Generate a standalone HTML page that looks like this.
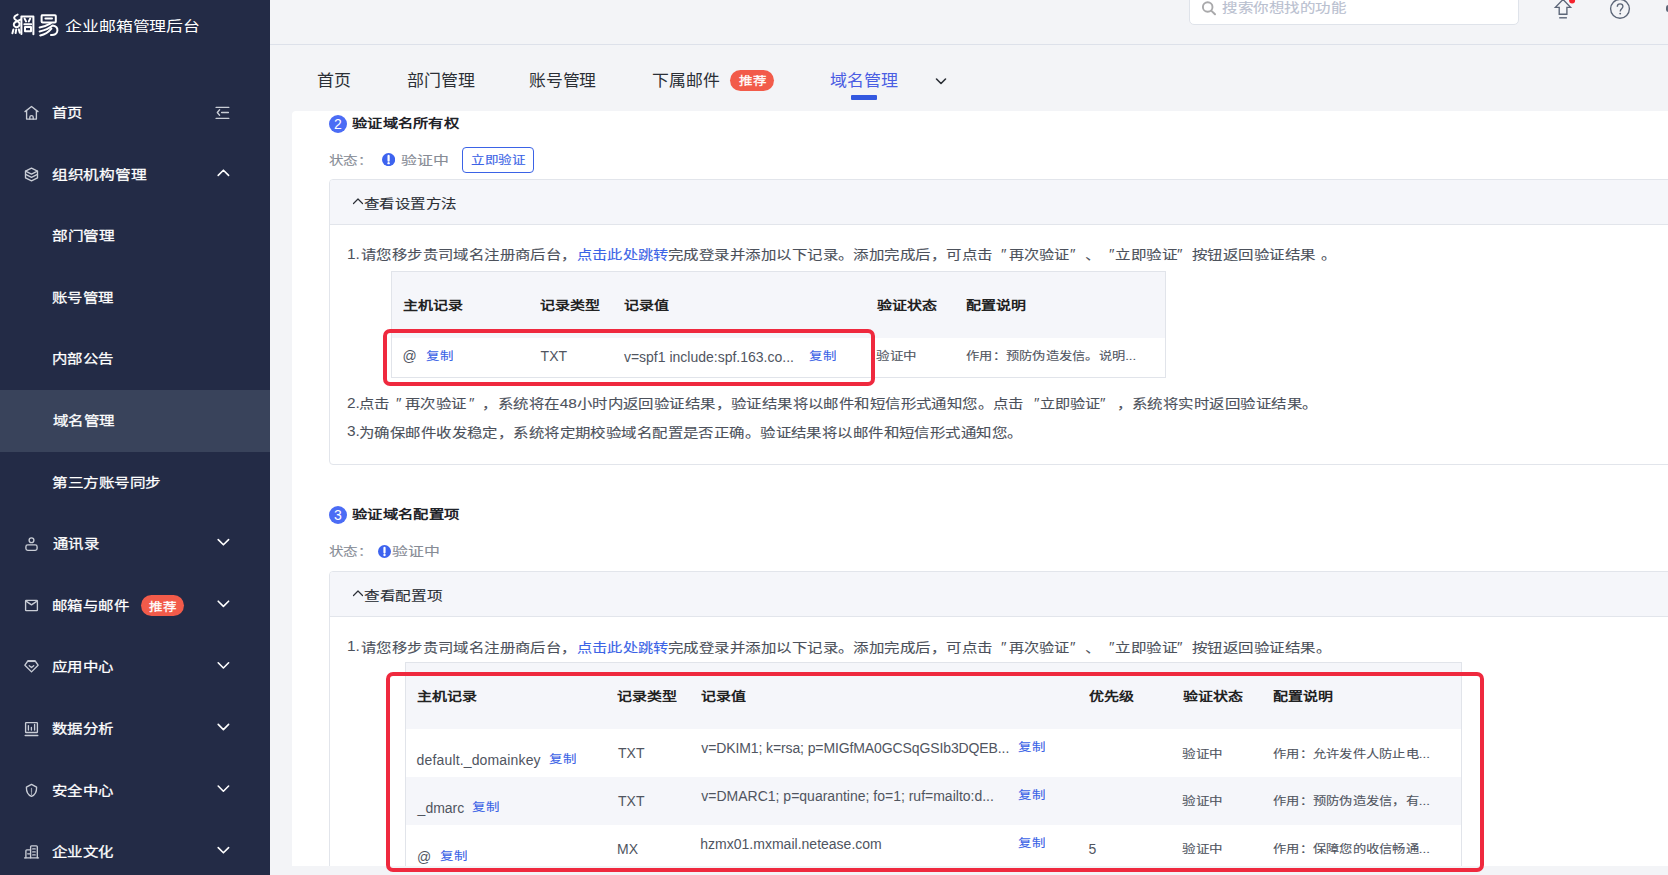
<!DOCTYPE html>
<html lang="zh-CN"><head><meta charset="utf-8">
<style>
*{box-sizing:border-box;margin:0;padding:0}
html,body{width:1668px;height:875px;overflow:hidden}
body{position:relative;background:#f3f4f7;font-family:"Liberation Sans", sans-serif}
.b{position:absolute;display:block}
.t{position:absolute;white-space:nowrap;line-height:1;transform-origin:0 0}
.s{-webkit-text-stroke:0.3px currentColor}
</style></head><body>
<div class=b style='left:0px;top:0px;width:270px;height:875px;background:#232b46'></div>
<div class=b style='left:0px;top:390px;width:270px;height:62px;background:#39435b'></div>
<div class=b style='left:140.6px;top:595px;width:43.0px;height:21px;background:#f25b4a;border-radius:11px'></div>
<svg class=b style='left:0;top:0' width='270' height='875' viewBox='0 0 270 875'><path fill='none' stroke='#c9cdd6' stroke-width='1.35' stroke-linejoin='round' stroke-linecap='round' d='M25 111.6 L31.5 106.5 L38 111.6'/><path fill='none' stroke='#c9cdd6' stroke-width='1.35' stroke-linejoin='round' stroke-linecap='round' d='M26.6 110.8 V119.1 H36.4 V110.8'/><path fill='none' stroke='#c9cdd6' stroke-width='1.35' stroke-linejoin='round' stroke-linecap='round' d='M29.8 119 V117.3 A1.7 1.7 0 0 1 33.2 117.3 V119'/><path fill='none' stroke='#c9cdd6' stroke-width='1.35' stroke-linejoin='round' stroke-linecap='round' d='M31.5 168.1 L37.5 171.1 V177.9 L31.5 180.9 L25.5 177.9 V171.1 Z'/><path fill='none' stroke='#c9cdd6' stroke-width='1.35' stroke-linejoin='round' stroke-linecap='round' d='M25.6 171.2 L31.5 174.1 L37.4 171.2'/><path fill='none' stroke='#c9cdd6' stroke-width='1.35' stroke-linejoin='round' stroke-linecap='round' d='M25.6 174.4 L31.5 177.3 L37.4 174.4'/><circle fill='none' stroke='#c9cdd6' stroke-width='1.35' stroke-linejoin='round' stroke-linecap='round' cx='31.5' cy='540.2' r='2.4'/><rect fill='none' stroke='#c9cdd6' stroke-width='1.35' stroke-linejoin='round' stroke-linecap='round' x='25.9' y='544.9' width='11.2' height='5.4' rx='1.8'/><rect fill='none' stroke='#c9cdd6' stroke-width='1.35' stroke-linejoin='round' stroke-linecap='round' x='25.6' y='600.4' width='11.8' height='10.2' rx='0.6'/><path fill='none' stroke='#c9cdd6' stroke-width='1.35' stroke-linejoin='round' stroke-linecap='round' d='M26.4 601.4 L31.5 604.9 L36.6 601.4'/><path fill='none' stroke='#c9cdd6' stroke-width='1.35' stroke-linejoin='round' stroke-linecap='round' d='M27.8 661 H35.2 L38.1 665.2 L31.5 671.9 L24.9 665.2 Z'/><path d='M27.8 661.1 H35.2' stroke='#c9cdd6' stroke-width='1.9'/><path fill='none' stroke='#c9cdd6' stroke-width='1.35' stroke-linejoin='round' stroke-linecap='round' d='M29.3 665.7 L31.5 667.6 L33.7 665.7'/><rect fill='none' stroke='#c9cdd6' stroke-width='1.35' stroke-linejoin='round' stroke-linecap='round' x='25.6' y='722.6' width='11.8' height='9.9' rx='0.6'/><path fill='none' stroke='#c9cdd6' stroke-width='1.35' stroke-linejoin='round' stroke-linecap='round' d='M25.2 735.5 H37.8'/><path fill='none' stroke='#c9cdd6' stroke-width='1.35' stroke-linejoin='round' stroke-linecap='round' d='M28.4 725.6 V730 M31.4 727.4 V730 M34.6 724.5 V730' stroke-width='1.1'/><path fill='none' stroke='#c9cdd6' stroke-width='1.35' stroke-linejoin='round' stroke-linecap='round' d='M31.5 784.4 L36.6 787.2 C36.7 791.5 35 795 31.5 796.4 C28 795 26.3 791.5 26.4 787.2 Z'/><path d='M31.5 788.3 V792.3 M31.5 793.6 V794.3' stroke='#9aa0ad' stroke-width='1.2' stroke-linecap='round'/><path fill='none' stroke='#c9cdd6' stroke-width='1.35' stroke-linejoin='round' stroke-linecap='round' d='M24.6 857.9 H38.5'/><path fill='none' stroke='#c9cdd6' stroke-width='1.35' stroke-linejoin='round' stroke-linecap='round' d='M30.6 857.8 V846.8 Q30.6 845.9 31.5 845.9 H36.4 Q37.3 845.9 37.3 846.8 V857.8'/><path fill='none' stroke='#c9cdd6' stroke-width='1.35' stroke-linejoin='round' stroke-linecap='round' d='M25.9 857.8 V850.7 Q25.9 849.8 26.8 849.8 H30.6'/><path fill='none' stroke='#c9cdd6' stroke-width='1.35' stroke-linejoin='round' stroke-linecap='round' d='M32.7 848.9 H35.2 M32.7 851.9 H35.2 M32.7 854.9 H35.2 M27.7 853.8 H30'/><path fill='none' stroke='#c9cdd6' stroke-width='1.35' stroke-linejoin='round' stroke-linecap='round' d='M216.1 107.4 H228.8 M216.1 118.4 H228.8 M221.6 112.5 H228.4'/><path fill='none' stroke='#c9cdd6' stroke-width='1.35' stroke-linejoin='round' stroke-linecap='round' d='M219.6 109.8 L217.3 112.5 L219.6 115.2'/><path fill='none' stroke='#ffffff' stroke-width='1.6' stroke-linecap='round' stroke-linejoin='round' d='M218.2 175.4 L223.4 170.2 L228.6 175.4'/><path fill='none' stroke='#ffffff' stroke-width='1.6' stroke-linecap='round' stroke-linejoin='round' d='M218.2 539.6 L223.4 544.8 L228.6 539.6'/><path fill='none' stroke='#ffffff' stroke-width='1.6' stroke-linecap='round' stroke-linejoin='round' d='M218.2 601.2 L223.4 606.4 L228.6 601.2'/><path fill='none' stroke='#ffffff' stroke-width='1.6' stroke-linecap='round' stroke-linejoin='round' d='M218.2 662.8 L223.4 668.0 L228.6 662.8'/><path fill='none' stroke='#ffffff' stroke-width='1.6' stroke-linecap='round' stroke-linejoin='round' d='M218.2 724.4 L223.4 729.6 L228.6 724.4'/><path fill='none' stroke='#ffffff' stroke-width='1.6' stroke-linecap='round' stroke-linejoin='round' d='M218.2 786.0 L223.4 791.2 L228.6 786.0'/><path fill='none' stroke='#ffffff' stroke-width='1.6' stroke-linecap='round' stroke-linejoin='round' d='M218.2 847.6 L223.4 852.8 L228.6 847.6'/></svg>
<svg class=b style='left:0;top:0' width='70' height='45' viewBox='0 0 70 45'><path fill='none' stroke='#ffffff' stroke-width='2.0' stroke-linecap='round' stroke-linejoin='round' d='M17.6 14.6 C15.2 15.4 13.3 17.2 14.6 19.0 C15.8 20.6 19.2 21.0 19.6 23.6 C19.9 26.2 17.6 27.6 15.6 27.0 C13.4 26.4 13.2 23.8 15.0 22.4 C16.6 21.2 18.6 20.6 20.4 19.6'/><path fill='none' stroke='#ffffff' stroke-width='2.0' stroke-linecap='round' stroke-linejoin='round' d='M13.4 29.4 L12.4 33.2 M16.2 29.6 L15.6 33.0 M18.8 29.4 L19.8 32.6'/><path fill='none' stroke='#ffffff' stroke-width='2.0' stroke-linecap='round' stroke-linejoin='round' d='M21.4 34.0 V16.4 H33.4 V34.2'/><path fill='none' stroke='#ffffff' stroke-width='2.0' stroke-linecap='round' stroke-linejoin='round' d='M24.6 18.6 L26.0 21.4 M30.2 18.6 L28.8 21.4 M24.4 24.2 H31.2 M25.0 27.0 V31.2 H31.0 V27.0 H25.0'/><path fill='none' stroke='#ffffff' stroke-width='2.0' stroke-linecap='round' stroke-linejoin='round' d='M42.0 15.2 H55.0 Q55.8 15.2 55.8 16.0 V21.6 Q55.8 22.6 54.8 22.6 H42.6 Q41.6 22.6 41.6 21.6 V16.0 Q41.6 15.2 42.4 15.2 Z'/><path fill='none' stroke='#ffffff' stroke-width='2.0' stroke-linecap='round' stroke-linejoin='round' d='M45.4 18.6 H52.0'/><path fill='none' stroke='#ffffff' stroke-width='2.0' stroke-linecap='round' stroke-linejoin='round' d='M39.6 27.4 C43.6 26.6 47.6 25.4 50.8 23.4'/><path fill='none' stroke='#ffffff' stroke-width='2.0' stroke-linecap='round' stroke-linejoin='round' d='M39.6 31.4 C44.8 30.4 49.6 28.2 52.6 25.6 C55.6 26.0 57.6 28.0 57.4 30.8 C57.2 33.6 54.4 35.4 51.0 35.0'/><path fill='none' stroke='#ffffff' stroke-width='2.0' stroke-linecap='round' stroke-linejoin='round' d='M40.2 35.4 C45.0 34.4 49.0 31.6 51.4 28.6'/></svg>
<div class=b style='left:270px;top:44px;width:1398px;height:1px;background:#dde1ea'></div>
<div class=b style='left:1189px;top:-12px;width:330px;height:37px;background:#fff;border:1px solid #dfe3ea;border-radius:5px'></div>
<svg class=b style='left:1200px;top:0px' width='18' height='17' viewBox='0 0 18 17'><circle cx='7.7' cy='7' r='4.8' fill='none' stroke='#a9a9ab' stroke-width='1.9'/><path d='M11.2 10.6 L15 14.3' stroke='#a9a9ab' stroke-width='2' stroke-linecap='round'/></svg>
<svg class=b style='left:0;top:0' width='1668' height='45' viewBox='0 0 1668 45'><path fill='none' stroke='#5b6577' stroke-width='1.35' stroke-linejoin='miter' d='M1563 -0.5 L1570.6 7.4 H1566.9 V14.2 H1559.2 V7.4 H1555.4 Z'/><path d='M1559.2 17.8 H1566.9' stroke='#5b6577' stroke-width='1.4'/><circle cx='1572.1' cy='0.5' r='3' fill='#f5222d'/><circle cx='1620' cy='8.8' r='9.4' fill='none' stroke='#5b6577' stroke-width='1.35' stroke-linejoin='miter'/><path d='M1617.3 6.7 C1617.3 4.9 1618.5 3.9 1620.1 3.9 C1621.8 3.9 1622.9 5 1622.9 6.5 C1622.9 8.6 1620.2 8.8 1620.2 11.4' fill='none' stroke='#5b6577' stroke-width='1.35'/><circle cx='1620.2' cy='13.6' r='0.95' fill='#5b6577'/><rect x='1666' y='5' width='6' height='7' rx='2.5' fill='#5b6577'/></svg>
<div class=b style='left:730.2px;top:70px;width:44.0px;height:21px;background:#f25b4a;border-radius:11px'></div>
<div class=b style='left:851px;top:95px;width:26px;height:4.5px;background:#3358e0;border-radius:1px'></div>
<svg class=b style='left:935px;top:77px' width='12' height='9' viewBox='0 0 12 9'><path fill='none' stroke='#2b2f36' stroke-width='1.6' stroke-linecap='round' stroke-linejoin='round' d='M1.5 2 L6 6.5 L10.5 2'/></svg>
<div class=b style='left:292px;top:111px;width:1376px;height:755px;background:#fff;border-radius:4px 0 0 0'></div>
<div class=b style='left:329px;top:115px;width:18px;height:18px;border-radius:50%;background:#4b6cf5;color:#fff;font-size:14px;line-height:18px;text-align:center;font-family:"Liberation Sans", sans-serif'>2</div>
<div class=b style='left:329px;top:506px;width:18px;height:18px;border-radius:50%;background:#4b6cf5;color:#fff;font-size:14px;line-height:18px;text-align:center;font-family:"Liberation Sans", sans-serif'>3</div>
<svg class=b style='left:382.2px;top:153px' width='13.2' height='13.2' viewBox='0 0 13.2 13.2'><circle cx='6.6' cy='6.6' r='6.6' fill='#3d63ef'/><path d='M6.6 2.904 V7.655999999999999' stroke='#fff' stroke-width='2.244' stroke-linecap='round'/><circle cx='6.6' cy='10.164' r='1.188' fill='#fff'/></svg>
<svg class=b style='left:377.8px;top:545px' width='13' height='13' viewBox='0 0 13 13'><circle cx='6.5' cy='6.5' r='6.5' fill='#3d63ef'/><path d='M6.5 2.86 V7.539999999999999' stroke='#fff' stroke-width='2.21' stroke-linecap='round'/><circle cx='6.5' cy='10.01' r='1.17' fill='#fff'/></svg>
<div class=b style='left:462px;top:147px;width:72px;height:26px;border:1px solid #3b63e6;border-radius:4px'></div>
<div class=b style='left:329px;top:179px;width:1371px;height:286px;border:1px solid #e2e5eb;border-radius:4px;background:#fff'></div>
<div class=b style='left:330px;top:180px;width:1370px;height:44px;background:#f5f6fa;border-radius:3px 0 0 0'></div>
<div class=b style='left:330px;top:224px;width:1370px;height:1px;background:#e2e5eb'></div>
<svg class=b style='left:351.5px;top:196px' width='12' height='9' viewBox='0 0 12 9'><path fill='none' stroke='#2b2f36' stroke-width='1.2' stroke-linecap='round' stroke-linejoin='round' d='M1.5 7.5 L6 3 L10.5 7.5'/></svg>
<div class=b style='left:391px;top:271px;width:775px;height:107px;border:1px solid #e1e4ea;background:#fff'></div>
<div class=b style='left:392px;top:272px;width:773px;height:65.5px;background:#f5f6fa'></div>
<div class=b style='left:329px;top:571px;width:1371px;height:329px;border:1px solid #e2e5eb;border-radius:4px;background:#fff'></div>
<div class=b style='left:330px;top:572px;width:1370px;height:44px;background:#f5f6fa;border-radius:3px 0 0 0'></div>
<div class=b style='left:330px;top:616px;width:1370px;height:1px;background:#e2e5eb'></div>
<svg class=b style='left:351.5px;top:588px' width='12' height='9' viewBox='0 0 12 9'><path fill='none' stroke='#2b2f36' stroke-width='1.2' stroke-linecap='round' stroke-linejoin='round' d='M1.5 7.5 L6 3 L10.5 7.5'/></svg>
<div class=b style='left:405px;top:662px;width:1057px;height:238px;border:1px solid #e1e4ea;background:#fff'></div>
<div class=b style='left:406px;top:663px;width:1055px;height:65.70000000000005px;background:#f5f6fa'></div>
<div class=b style='left:406px;top:776.7px;width:1055px;height:48.19999999999993px;background:#f5f6fa'></div>
<div class=b style='left:270px;top:866px;width:1398px;height:9px;background:#f3f4f7'></div>
<div class='t' style='left:65px;top:20px;font-size:16px;color:#fff;transform:scale(1.0552,0.8559);font-weight:500;'>企业邮箱管理后台</div>
<div class='t' style='left:51.5px;top:106.0px;font-size:15px;color:#fff;transform:scale(1.0267,0.8521);font-weight:500;-webkit-text-stroke:0.3px currentColor;'>首页</div>
<div class='t' style='left:51.5px;top:167.6px;font-size:15px;color:#fff;transform:scale(1.047,0.8521);font-weight:500;-webkit-text-stroke:0.3px currentColor;'>组织机构管理</div>
<div class='t' style='left:51.5px;top:229.2px;font-size:15px;color:#fff;transform:scale(1.0439,0.8521);font-weight:500;-webkit-text-stroke:0.3px currentColor;'>部门管理</div>
<div class='t' style='left:51.5px;top:290.8px;font-size:15px;color:#fff;transform:scale(1.0267,0.8521);font-weight:500;-webkit-text-stroke:0.3px currentColor;'>账号管理</div>
<div class='t' style='left:51.5px;top:352.4px;font-size:15px;color:#fff;transform:scale(1.0267,0.8521);font-weight:500;-webkit-text-stroke:0.3px currentColor;'>内部公告</div>
<div class='t' style='left:52.5px;top:414.0px;font-size:15px;color:#fff;transform:scale(1.0301,0.8521);font-weight:500;-webkit-text-stroke:0.3px currentColor;'>域名管理</div>
<div class='t' style='left:51.5px;top:475.6px;font-size:15px;color:#fff;transform:scale(1.0383,0.8521);font-weight:500;-webkit-text-stroke:0.3px currentColor;'>第三方账号同步</div>
<div class='t' style='left:52.5px;top:537.2px;font-size:15px;color:#fff;transform:scale(1.0267,0.8521);font-weight:500;-webkit-text-stroke:0.3px currentColor;'>通讯录</div>
<div class='t' style='left:51.5px;top:598.8px;font-size:15px;color:#fff;transform:scale(1.0267,0.8521);font-weight:500;-webkit-text-stroke:0.3px currentColor;'>邮箱与邮件</div>
<div class='t' style='left:51.5px;top:660.4px;font-size:15px;color:#fff;transform:scale(1.0267,0.8521);font-weight:500;-webkit-text-stroke:0.3px currentColor;'>应用中心</div>
<div class='t' style='left:51.5px;top:722.0px;font-size:15px;color:#fff;transform:scale(1.0267,0.8521);font-weight:500;-webkit-text-stroke:0.3px currentColor;'>数据分析</div>
<div class='t' style='left:51.5px;top:783.6px;font-size:15px;color:#fff;transform:scale(1.0267,0.8521);font-weight:500;-webkit-text-stroke:0.3px currentColor;'>安全中心</div>
<div class='t' style='left:51.5px;top:845.2px;font-size:15px;color:#fff;transform:scale(1.0267,0.8521);font-weight:500;-webkit-text-stroke:0.3px currentColor;'>企业文化</div>
<div class='t' style='left:148.6px;top:600.6px;font-size:14px;color:#fff;transform:scale(0.9643,0.8389);font-weight:500;-webkit-text-stroke:0.3px currentColor;'>推荐</div>
<div class='t' style='left:317px;top:73px;font-size:17px;color:#2b2f36;transform:scale(1.0,0.96);font-weight:500;'>首页</div>
<div class='t' style='left:406.8px;top:73px;font-size:17px;color:#2b2f36;transform:scale(0.9973,0.96);font-weight:500;'>部门管理</div>
<div class='t' style='left:529.2px;top:73px;font-size:17px;color:#2b2f36;transform:scale(0.9884,0.96);font-weight:500;'>账号管理</div>
<div class='t' style='left:652.4px;top:73px;font-size:17px;color:#2b2f36;transform:scale(0.991,0.96);font-weight:500;'>下属邮件</div>
<div class='t' style='left:738.8px;top:75px;font-size:14px;color:#fff;transform:scale(0.9643,0.8389);font-weight:500;-webkit-text-stroke:0.3px currentColor;'>推荐</div>
<div class='t' style='left:830px;top:73px;font-size:17px;color:#4a5de3;transform:scale(1.0001,0.96);font-weight:500;'>域名管理</div>
<div class='t' style='left:1222.3px;top:1px;font-size:15px;color:#b9c0cf;transform:scale(1.0334,0.8521);font-weight:500;-webkit-text-stroke:0.12px currentColor;'>搜索你想找的功能</div>
<div class='t' style='left:351.7px;top:117px;font-size:15px;color:#1f2329;transform:scale(1.0172,0.83);font-weight:700;'>验证域名所有权</div>
<div class='t' style='left:328.5px;top:154.5px;font-size:14px;color:#878c96;transform:scale(1.0357,0.8596);font-weight:500;-webkit-text-stroke:0.12px currentColor;'>状态：</div>
<div class='t' style='left:401.2px;top:153.5px;font-size:15px;color:#878c96;transform:scale(1.0613,0.83);font-weight:500;-webkit-text-stroke:0.12px currentColor;'>验证中</div>
<div class='t' style='left:471px;top:154.2px;font-size:14px;color:#3b63e6;transform:scale(0.9681,0.8389);font-weight:500;-webkit-text-stroke:0.12px currentColor;'>立即验证</div>
<div class='t' style='left:363.7px;top:196.7px;font-size:15px;color:#2b2f36;transform:scale(1.0316,0.8411);font-weight:500;-webkit-text-stroke:0.12px currentColor;'>查看设置方法</div>
<div class='t' style='left:347px;top:246.1px;font-size:15px;color:#4c515b;transform:scale(1.0267,1.0267);font-weight:500;'>1.</div>
<div class='t' style='left:361.2px;top:248.4px;font-size:15px;color:#4c515b;transform:scale(1.0267,0.8521);font-weight:500;-webkit-text-stroke:0.12px currentColor;'>请您移步贵司域名注册商后台，</div>
<div class='t' style='left:576.5px;top:248.4px;font-size:15px;color:#3b63e6;transform:scale(1.0154,0.8521);font-weight:500;-webkit-text-stroke:0.12px currentColor;'>点击此处跳转</div>
<div class='t' style='left:668px;top:248.4px;font-size:15px;color:#4c515b;transform:scale(1.0305,0.8521);font-weight:500;-webkit-text-stroke:0.12px currentColor;'>完成登录并添加以下记录。添加完成后，可点击</div>
<div class='t' style='left:1001px;top:246.2px;font-size:15px;color:#4c515b;transform:scale(1.0267,1.0267);font-weight:500;'>″</div>
<div class='t' style='left:1009px;top:248.4px;font-size:15px;color:#4c515b;transform:scale(1.0103,0.8521);font-weight:500;-webkit-text-stroke:0.12px currentColor;'>再次验证</div>
<div class='t' style='left:1070px;top:246.2px;font-size:15px;color:#4c515b;transform:scale(1.0267,1.0267);font-weight:500;'>″</div>
<div class='t' style='left:1085px;top:248.4px;font-size:15px;color:#4c515b;transform:scale(1.0267,0.8521);font-weight:500;-webkit-text-stroke:0.12px currentColor;'>、</div>
<div class='t' style='left:1108.5px;top:246.2px;font-size:15px;color:#4c515b;transform:scale(1.0267,1.0267);font-weight:500;'>″</div>
<div class='t' style='left:1115px;top:248.4px;font-size:15px;color:#4c515b;transform:scale(1.037,0.8521);font-weight:500;-webkit-text-stroke:0.12px currentColor;'>立即验证</div>
<div class='t' style='left:1177px;top:246.2px;font-size:15px;color:#4c515b;transform:scale(1.0267,1.0267);font-weight:500;'>″</div>
<div class='t' style='left:1192.3px;top:248.4px;font-size:15px;color:#4c515b;transform:scale(1.0284,0.8521);font-weight:500;-webkit-text-stroke:0.12px currentColor;'>按钮返回验证结果</div>
<div class='t' style='left:1321px;top:248.4px;font-size:15px;color:#4c515b;transform:scale(1.0267,0.8521);font-weight:500;-webkit-text-stroke:0.12px currentColor;'>。</div>
<div class='t' style='left:402.5px;top:299.3px;font-size:15px;color:#222;transform:scale(1.0,0.83);font-weight:700;'>主机记录</div>
<div class='t' style='left:540px;top:299.3px;font-size:15px;color:#222;transform:scale(1.0,0.83);font-weight:700;'>记录类型</div>
<div class='t' style='left:623.9px;top:299.3px;font-size:15px;color:#222;transform:scale(1.0,0.83);font-weight:700;'>记录值</div>
<div class='t' style='left:876.9px;top:299.3px;font-size:15px;color:#222;transform:scale(1.0,0.83);font-weight:700;'>验证状态</div>
<div class='t' style='left:966px;top:299.3px;font-size:15px;color:#222;transform:scale(1.0,0.83);font-weight:700;'>配置说明</div>
<div class='t' style='left:402.5px;top:348.5px;font-size:14px;color:#50555f;font-weight:500;'>@</div>
<div class='t' style='left:425.9px;top:349.5px;font-size:14px;color:#3b63e6;transform:scale(0.9643,0.8389);font-weight:500;-webkit-text-stroke:0.12px currentColor;'>复制</div>
<div class='t' style='left:540.6px;top:349px;font-size:14px;color:#50555f;font-weight:500;'>TXT</div>
<div class='t' style='left:623.9px;top:350px;font-size:14px;color:#50555f;font-weight:500;'>v=spf1 include:spf.163.co...</div>
<div class='t' style='left:808.5px;top:349.5px;font-size:14px;color:#3b63e6;transform:scale(0.9643,0.8389);font-weight:500;-webkit-text-stroke:0.12px currentColor;'>复制</div>
<div class='t' style='left:875.9px;top:349.5px;font-size:14px;color:#50555f;transform:scale(0.9643,0.8389);font-weight:500;-webkit-text-stroke:0.12px currentColor;'>验证中</div>
<div class='t' style='left:966px;top:349.5px;font-size:14px;color:#50555f;transform:scale(0.9474,0.8389);font-weight:500;-webkit-text-stroke:0.12px currentColor;'>作用：预防伪造发信。说明...</div>
<div class='t' style='left:347.2px;top:394.5px;font-size:15px;color:#4c515b;transform:scale(1.0267,1.0267);font-weight:500;'>2.</div>
<div class='t' style='left:358.9px;top:396.8px;font-size:15px;color:#4c515b;transform:scale(1.0267,0.8521);font-weight:500;-webkit-text-stroke:0.12px currentColor;'>点击</div>
<div class='t' style='left:396.2px;top:394.6px;font-size:15px;color:#4c515b;transform:scale(1.0267,1.0267);font-weight:500;'>″</div>
<div class='t' style='left:404.8px;top:396.8px;font-size:15px;color:#4c515b;transform:scale(1.0268,0.8521);font-weight:500;-webkit-text-stroke:0.12px currentColor;'>再次验证</div>
<div class='t' style='left:468.5px;top:394.6px;font-size:15px;color:#4c515b;transform:scale(1.0267,1.0267);font-weight:500;'>″</div>
<div class='t' style='left:481.5px;top:396.8px;font-size:15px;color:#4c515b;transform:scale(1.0267,0.8521);font-weight:500;-webkit-text-stroke:0.12px currentColor;'>，</div>
<div class='t' style='left:497.6px;top:396.8px;font-size:15px;color:#4c515b;transform:scale(1.0278,0.8521);font-weight:500;-webkit-text-stroke:0.12px currentColor;'>系统将在<span style='letter-spacing:0'>48</span>小时内返回验证结果，验证结果将以邮件和短信形式通知您。点击</div>
<div class='t' style='left:1034.3px;top:394.6px;font-size:15px;color:#4c515b;transform:scale(1.0267,1.0267);font-weight:500;'>″</div>
<div class='t' style='left:1039.9px;top:396.8px;font-size:15px;color:#4c515b;transform:scale(1.01,0.8521);font-weight:500;-webkit-text-stroke:0.12px currentColor;'>立即验证</div>
<div class='t' style='left:1100px;top:394.6px;font-size:15px;color:#4c515b;transform:scale(1.0267,1.0267);font-weight:500;'>″</div>
<div class='t' style='left:1117px;top:396.8px;font-size:15px;color:#4c515b;transform:scale(1.0267,0.8521);font-weight:500;-webkit-text-stroke:0.12px currentColor;'>，</div>
<div class='t' style='left:1131.6px;top:396.8px;font-size:15px;color:#4c515b;transform:scale(1.0303,0.8521);font-weight:500;-webkit-text-stroke:0.12px currentColor;'>系统将实时返回验证结果。</div>
<div class='t' style='left:347.2px;top:423.3px;font-size:15px;color:#4c515b;transform:scale(1.0267,1.0267);font-weight:500;'>3.</div>
<div class='t' style='left:358.9px;top:425.6px;font-size:15px;color:#4c515b;transform:scale(1.0286,0.8521);font-weight:500;-webkit-text-stroke:0.12px currentColor;'>为确保邮件收发稳定，系统将定期校验域名配置是否正确。验证结果将以邮件和短信形式通知您。</div>
<div class='t' style='left:351.7px;top:508px;font-size:15px;color:#1f2329;transform:scale(1.0229,0.83);font-weight:700;'>验证域名配置项</div>
<div class='t' style='left:328.8px;top:546.4px;font-size:14px;color:#878c96;transform:scale(1.0357,0.8596);font-weight:500;-webkit-text-stroke:0.12px currentColor;'>状态：</div>
<div class='t' style='left:392.4px;top:545.4px;font-size:15px;color:#878c96;transform:scale(1.0613,0.83);font-weight:500;-webkit-text-stroke:0.12px currentColor;'>验证中</div>
<div class='t' style='left:363.6px;top:588.5px;font-size:15px;color:#2b2f36;transform:scale(1.0432,0.8411);font-weight:500;-webkit-text-stroke:0.12px currentColor;'>查看配置项</div>
<div class='t' style='left:347px;top:638.4px;font-size:15px;color:#4c515b;transform:scale(1.0267,1.0267);font-weight:500;'>1.</div>
<div class='t' style='left:361.2px;top:640.7px;font-size:15px;color:#4c515b;transform:scale(1.0267,0.8521);font-weight:500;-webkit-text-stroke:0.12px currentColor;'>请您移步贵司域名注册商后台，</div>
<div class='t' style='left:576.5px;top:640.7px;font-size:15px;color:#3b63e6;transform:scale(1.0154,0.8521);font-weight:500;-webkit-text-stroke:0.12px currentColor;'>点击此处跳转</div>
<div class='t' style='left:668px;top:640.7px;font-size:15px;color:#4c515b;transform:scale(1.0305,0.8521);font-weight:500;-webkit-text-stroke:0.12px currentColor;'>完成登录并添加以下记录。添加完成后，可点击</div>
<div class='t' style='left:1001px;top:638.5px;font-size:15px;color:#4c515b;transform:scale(1.0267,1.0267);font-weight:500;'>″</div>
<div class='t' style='left:1009px;top:640.7px;font-size:15px;color:#4c515b;transform:scale(1.0103,0.8521);font-weight:500;-webkit-text-stroke:0.12px currentColor;'>再次验证</div>
<div class='t' style='left:1070px;top:638.5px;font-size:15px;color:#4c515b;transform:scale(1.0267,1.0267);font-weight:500;'>″</div>
<div class='t' style='left:1085px;top:640.7px;font-size:15px;color:#4c515b;transform:scale(1.0267,0.8521);font-weight:500;-webkit-text-stroke:0.12px currentColor;'>、</div>
<div class='t' style='left:1108.5px;top:638.5px;font-size:15px;color:#4c515b;transform:scale(1.0267,1.0267);font-weight:500;'>″</div>
<div class='t' style='left:1115px;top:640.7px;font-size:15px;color:#4c515b;transform:scale(1.037,0.8521);font-weight:500;-webkit-text-stroke:0.12px currentColor;'>立即验证</div>
<div class='t' style='left:1177px;top:638.5px;font-size:15px;color:#4c515b;transform:scale(1.0267,1.0267);font-weight:500;'>″</div>
<div class='t' style='left:1192.3px;top:640.7px;font-size:15px;color:#4c515b;transform:scale(1.0284,0.8521);font-weight:500;-webkit-text-stroke:0.12px currentColor;'>按钮返回验证结果</div>
<div class='t' style='left:1316px;top:640.7px;font-size:15px;color:#4c515b;transform:scale(1.0267,0.8521);font-weight:500;-webkit-text-stroke:0.12px currentColor;'>。</div>
<div class='t' style='left:416.7px;top:690px;font-size:15px;color:#222;transform:scale(1.0,0.83);font-weight:700;'>主机记录</div>
<div class='t' style='left:617px;top:690px;font-size:15px;color:#222;transform:scale(1.0,0.83);font-weight:700;'>记录类型</div>
<div class='t' style='left:700.9px;top:690px;font-size:15px;color:#222;transform:scale(1.0,0.83);font-weight:700;'>记录值</div>
<div class='t' style='left:1089.3px;top:690px;font-size:15px;color:#222;transform:scale(1.0,0.83);font-weight:700;'>优先级</div>
<div class='t' style='left:1183.4px;top:690px;font-size:15px;color:#222;transform:scale(1.0,0.83);font-weight:700;'>验证状态</div>
<div class='t' style='left:1273.2px;top:690px;font-size:15px;color:#222;transform:scale(1.0,0.83);font-weight:700;'>配置说明</div>
<div class='t' style='left:416.6px;top:752.9px;font-size:14px;color:#50555f;letter-spacing:0.153px;font-weight:500;'>default._domainkey</div>
<div class='t' style='left:549.2px;top:753px;font-size:14px;color:#3b63e6;transform:scale(0.9643,0.8389);font-weight:500;-webkit-text-stroke:0.12px currentColor;'>复制</div>
<div class='t' style='left:618px;top:746px;font-size:14px;color:#50555f;font-weight:500;'>TXT</div>
<div class='t' style='left:701.3px;top:741px;font-size:14px;color:#50555f;letter-spacing:-0.11px;font-weight:500;'>v=DKIM1; k=rsa; p=MIGfMA0GCSqGSIb3DQEB...</div>
<div class='t' style='left:1018px;top:741px;font-size:14px;color:#3b63e6;transform:scale(0.9643,0.8389);font-weight:500;-webkit-text-stroke:0.12px currentColor;'>复制</div>
<div class='t' style='left:1182.4px;top:747.6px;font-size:14px;color:#50555f;transform:scale(0.9656,0.8389);font-weight:500;-webkit-text-stroke:0.12px currentColor;'>验证中</div>
<div class='t' style='left:1273.1px;top:747.6px;font-size:14px;color:#50555f;transform:scale(0.9472,0.8389);font-weight:500;-webkit-text-stroke:0.12px currentColor;'>作用：允许发件人防止电...</div>
<div class='t' style='left:417.6px;top:801.4px;font-size:14px;color:#50555f;font-weight:500;'>_dmarc</div>
<div class='t' style='left:471.8px;top:801.2px;font-size:14px;color:#3b63e6;transform:scale(0.9643,0.8389);font-weight:500;-webkit-text-stroke:0.12px currentColor;'>复制</div>
<div class='t' style='left:618px;top:794.2px;font-size:14px;color:#50555f;font-weight:500;'>TXT</div>
<div class='t' style='left:701.3px;top:789px;font-size:14px;color:#50555f;font-weight:500;'>v=DMARC1; p=quarantine; fo=1; ruf=mailto:d...</div>
<div class='t' style='left:1018px;top:789px;font-size:14px;color:#3b63e6;transform:scale(0.9643,0.8389);font-weight:500;-webkit-text-stroke:0.12px currentColor;'>复制</div>
<div class='t' style='left:1182.4px;top:795.4px;font-size:14px;color:#50555f;transform:scale(0.9656,0.8389);font-weight:500;-webkit-text-stroke:0.12px currentColor;'>验证中</div>
<div class='t' style='left:1273.1px;top:795.4px;font-size:14px;color:#50555f;transform:scale(0.9472,0.8389);font-weight:500;-webkit-text-stroke:0.12px currentColor;'>作用：预防伪造发信，有...</div>
<div class='t' style='left:417px;top:850px;font-size:14px;color:#50555f;font-weight:500;'>@</div>
<div class='t' style='left:440px;top:850.1px;font-size:14px;color:#3b63e6;transform:scale(0.9643,0.8389);font-weight:500;-webkit-text-stroke:0.12px currentColor;'>复制</div>
<div class='t' style='left:617px;top:842.2px;font-size:14px;color:#50555f;font-weight:500;'>MX</div>
<div class='t' style='left:700.3px;top:837px;font-size:14px;color:#50555f;letter-spacing:0.008px;font-weight:500;'>hzmx01.mxmail.netease.com</div>
<div class='t' style='left:1018px;top:837px;font-size:14px;color:#3b63e6;transform:scale(0.9643,0.8389);font-weight:500;-webkit-text-stroke:0.12px currentColor;'>复制</div>
<div class='t' style='left:1088.5px;top:842px;font-size:14px;color:#50555f;font-weight:500;'>5</div>
<div class='t' style='left:1182.4px;top:843.3px;font-size:14px;color:#50555f;transform:scale(0.9656,0.8389);font-weight:500;-webkit-text-stroke:0.12px currentColor;'>验证中</div>
<div class='t' style='left:1273.1px;top:843.3px;font-size:14px;color:#50555f;transform:scale(0.9472,0.8389);font-weight:500;-webkit-text-stroke:0.12px currentColor;'>作用：保障您的收信畅通...</div>
<div class=b style='left:383px;top:329px;width:492px;height:56.5px;border:4px solid #ef293e;border-radius:7px'></div>
<div class=b style='left:386px;top:672px;width:1098px;height:200px;border:4px solid #ef293e;border-radius:7px'></div>
</body></html>
